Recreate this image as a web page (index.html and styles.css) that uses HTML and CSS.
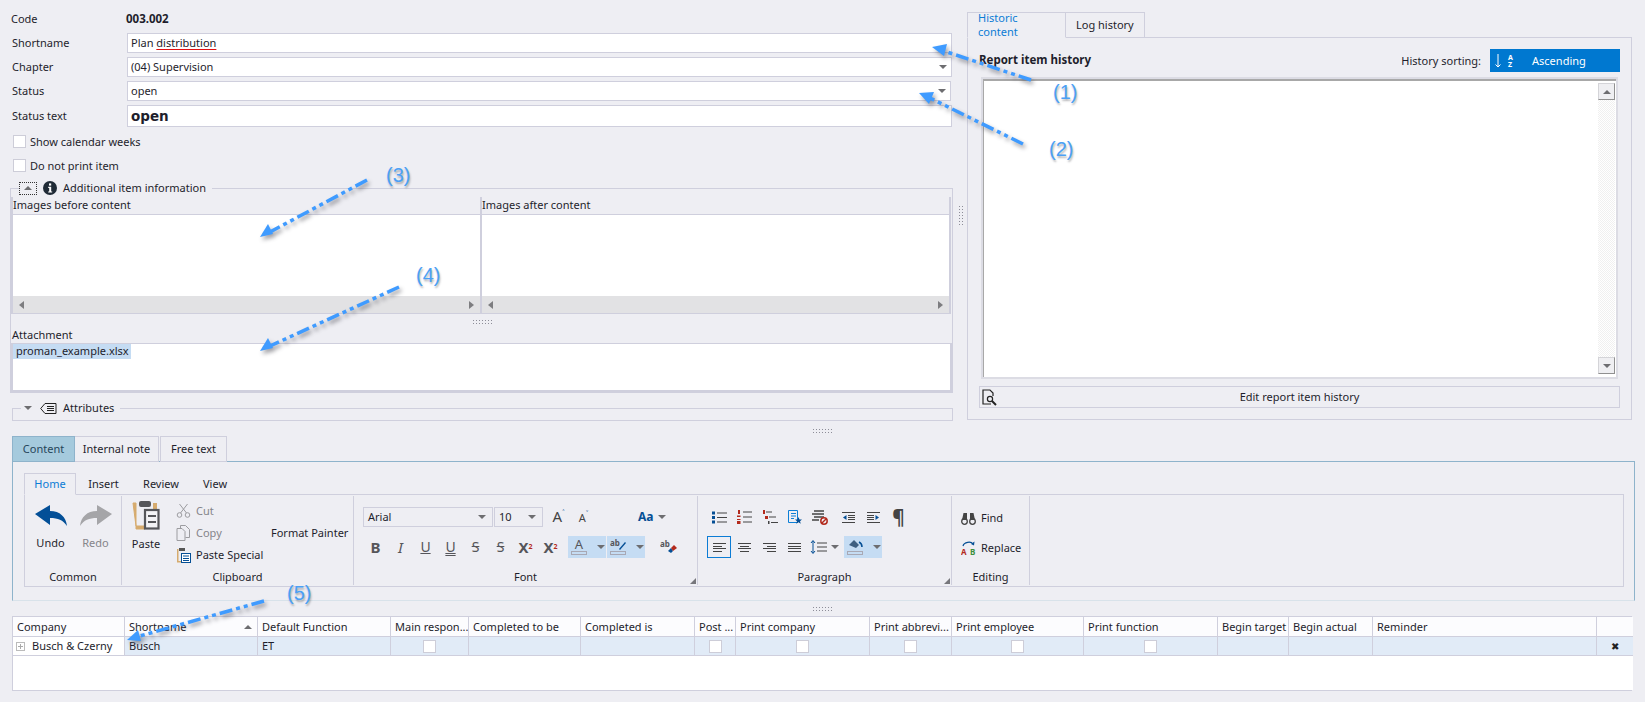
FILE: index.html
```html
<!DOCTYPE html>
<html lang="en">
<head>
<meta charset="utf-8">
<title>Report item</title>
<link rel="stylesheet" href="styles.css">
</head>
<body>
<div class="page">
  <div class="top">
    <section class="left">
      <div class="form">
        <div class="code-row"><span class="label">Code</span><b class="code">003.002</b></div>
        <div class="row"><span class="label">Shortname</span><div class="field">Plan&nbsp;<span class="spell">distribution</span></div></div>
        <div class="row"><span class="label">Chapter</span><div class="field combo">(04) Supervision<i class="tri"></i></div></div>
        <div class="row"><span class="label">Status</span><div class="field combo short">open<i class="tri"></i></div></div>
        <div class="row tall"><span class="label">Status text</span><div class="field big">open</div></div>
      </div>
      <div class="check first"><i class="box"></i>Show calendar weeks</div>
      <div class="check"><i class="box"></i>Do not print item</div>

      <fieldset class="group info">
        <legend class="legend">
          <span class="collapse"><i class="tri up"></i></span>
          <svg class="ico" width="14" height="14" viewBox="0 0 14 14"><circle cx="7" cy="7" r="7" fill="#1f2a36"/><rect x="6" y="2.4" width="2.2" height="2.2" fill="#fff"/><path d="M5.2 5.8h3v4.6h1v1.2H5.2v-1.2h1V7H5.2z" fill="#fff"/></svg>
          <span>Additional item information</span>
        </legend>
        <div class="images">
          <div class="image-col">
            <div class="image-head">Images before content</div>
            <div class="image-body"></div>
            <div class="hscroll"><i class="tri left-tri"></i><i class="tri right-tri"></i></div>
          </div>
          <div class="image-col">
            <div class="image-head">Images after content</div>
            <div class="image-body"></div>
            <div class="hscroll"><i class="tri left-tri"></i><i class="tri right-tri"></i></div>
          </div>
        </div>
        <div class="grip-row"><i class="grip"></i></div>
        <div class="attach-label">Attachment</div>
        <div class="attach"><span class="attach-item">proman_example.xlsx</span></div>
      </fieldset>

      <fieldset class="group attrs">
        <legend class="legend plain">
          <i class="tri down-big"></i>
          <svg class="ico" width="17" height="11" viewBox="0 0 17 11" fill="none" stroke="#222" stroke-width="1"><path d="M16 .5H5L.7 5.5 5 10.5h11z"/><path d="M7 3.5h7M7 5.5h7M7 7.5h7"/></svg>
          <span>Attributes</span>
        </legend>
      </fieldset>
    </section>

    <div class="vsplit"><i class="grip vertical"></i></div>

    <section class="right">
      <div class="tabs">
        <div class="tab active-blue">Historic content</div>
        <div class="tab">Log history</div>
      </div>
      <div class="history">
        <div class="history-head">
          <b>Report item history</b>
          <span class="sort-label">History sorting:</span>
          <div class="sort-btn">
            <svg width="13" height="14" viewBox="0 0 13 14" fill="none" stroke="#fff"><path d="M3 0v13M.5 10.5 3 13l2.500-2.500"/></svg>
            <span class="az"><span>A</span><span>Z</span></span>
            <span class="sort-text">Ascending</span>
          </div>
        </div>
        <div class="history-box">
          <div class="history-text">
            <div class="vscroll">
              <div class="sb"><i class="tri up"></i></div>
              <div class="sb"><i class="tri"></i></div>
            </div>
          </div>
        </div>
        <div class="edit-btn">
          <svg class="edit-ico" width="17" height="17" viewBox="0 0 17 17" fill="none" stroke="#222" stroke-width="1.200"><path d="M10 15H2V1h7l3 3v3"/><circle cx="9" cy="10" r="2.600"/><path d="m11 12 4 4" stroke-width="2"/></svg>
          <span>Edit report item history</span>
        </div>
      </div>
    </section>
  </div>

  <div class="hsplit"><i class="grip"></i></div>

  <section class="editor">
    <div class="tabs editor-tabs">
      <div class="tab tab-selected">Content</div>
      <div class="tab">Internal note</div>
      <div class="tab">Free text</div>
    </div>
    <div class="editor-panel">
      <div class="rtabs">
        <div class="rtab on">Home</div>
        <div class="rtab">Insert</div>
        <div class="rtab">Review</div>
        <div class="rtab">View</div>
      </div>
      <div class="ribbon">
        <div class="rgroup g-common">
          <div class="rbody bigs">
            <div class="big-btn"><svg width="32" height="21" viewBox="0 0 32 21"><path d="M0 9 15 0v6c10 0 16 6 17 15-4-6-9-8-17-8v7z" fill="#034f97"/></svg><span>Undo</span></div>
            <div class="big-btn dis"><svg width="32" height="21" viewBox="0 0 32 21"><path d="M32 9 17 0v6C7 6 1 12 0 21c4-6 9-8 17-8v7z" fill="#a5a5a8"/></svg><span>Redo</span></div>
          </div>
          <div class="rlabel">Common</div>
        </div>

        <div class="rgroup g-clip">
          <div class="rbody clip">
            <div class="big-btn paste"><svg width="28" height="30" viewBox="0 0 28 30"><path d="M1 3h3v26h9v-3H4z" fill="#d6ab6e" stroke="#d6ab6e"/><rect x="21" y="3" width="4" height="7" fill="#d6ab6e"/><rect x="7" y="1" width="12" height="6" rx="2" fill="#55565a"/><rect x="13" y="10" width="13.500" height="18.500" fill="#f3f3f6" stroke="#55565a" stroke-width="2.200"/><path d="M16 16h8M16 22h8" stroke="#55565a" stroke-width="2"/></svg><span>Paste</span></div>
            <div class="small-col">
              <div class="small dis"><svg width="14" height="14" viewBox="0 0 14 14" fill="none" stroke="#9c9ca0"><circle cx="3" cy="11" r="2.300"/><circle cx="11" cy="11" r="2.300"/><path d="M4 9 11 0M10 9 3 0"/></svg><span>Cut</span></div>
              <div class="small dis"><svg width="14" height="16" viewBox="0 0 14 16" fill="none" stroke="#9c9ca0"><path d="M4 3V.5h5l4 4v8H9M.5 3.500h5l3 3v9h-8z"/></svg><span>Copy</span></div>
              <div class="small"><svg width="15" height="15" viewBox="0 0 15 15"><path d="M1 1h1.500v12H6v1.500H1z" fill="#d6ab6e"/><rect x="3" y="0" width="6" height="3" fill="#555"/><rect x="5.500" y="5.500" width="9" height="9" fill="#fff" stroke="#054f95"/><path d="M7 8h6M7 10.500h6M7 12.500h6" stroke="#054f95"/></svg><span>Paste Special</span></div>
            </div>
            <span class="painter">Format Painter</span>
          </div>
          <div class="rlabel">Clipboard</div>
        </div>

        <div class="rgroup g-font">
          <div class="rbody tools">
            <div class="tool-row">
              <div class="select w-font">Arial<i class="tri"></i></div>
              <div class="select w-size">10<i class="tri"></i></div>
              <div class="glyphs">
                <span class="grow">A<sup>˄</sup></span>
                <span class="shrink">A<sup>˅</sup></span>
              </div>
              <span class="aa">Aa<i class="tri"></i></span>
            </div>
            <div class="tool-row r2">
              <span class="cell fb">B</span>
              <span class="cell fi">I</span>
              <span class="cell fu">U</span>
              <span class="cell fuu">U</span>
              <span class="cell fs">S</span>
              <span class="cell fs2">S</span>
              <span class="cell fx">X<sup>2</sup></span>
              <span class="cell fx">X<sub>2</sub></span>
              <div class="hl hl-a"><span class="hl-main"><span class="hl-t">A</span><i class="hl-bar"></i></span><i class="tri"></i></div>
              <div class="hl"><span class="hl-main"><svg width="16" height="11" viewBox="0 0 16 11"><text x="0" y="7" class="mini">ab</text><path d="M9 10 15 3l1 1-6 7z" fill="#054f95"/></svg><i class="hl-bar"></i></span><i class="tri"></i></div>
              <span class="clear"><svg width="17" height="14" viewBox="0 0 17 14"><text x="0" y="7" class="mini">ab</text><path d="m8 11 3-3 2 3-2 2z" fill="#054f95"/><path d="m11 8 3-3 3 3-4 3z" fill="#b32a1c"/></svg></span>
            </div>
          </div>
          <div class="rlabel">Font<i class="launcher"></i></div>
        </div>

        <div class="rgroup g-para">
          <div class="rbody tools">
            <div class="tool-row">
              <span class="cell"><svg width="15" height="13" viewBox="0 0 15 13"><path d="M5 2h10M5 6.500h10M5 11h10" stroke="#444"/><path d="M0 .5h3v3H0zM0 5h3v3H0zM0 9.500h3v3H0z" fill="#054f95"/></svg></span>
              <span class="cell"><svg width="15" height="14" viewBox="0 0 15 14"><path d="M6 2h9M6 7h9M6 12h9" stroke="#444"/><path d="M1 0h2v4H1zM0 5.500h3.500v1.500H0v2h3.500v1H0zM0 11h3.500v3H0z" fill="#b32a1c"/></svg></span>
              <span class="cell"><svg width="16" height="14" viewBox="0 0 16 14"><path d="M4 2h6M7 7h7M9 12.500h7" stroke="#444"/><path d="M1 0h2v4H1zM3 6h3v3H3z" fill="#b32a1c"/><path d="M6 11h1.500v3H6z" fill="#444"/></svg></span>
              <span class="cell"><svg width="14" height="14" viewBox="0 0 14 14" fill="none"><path d="M.5.500h9v12h-9z" stroke="#0c7fd6"/><path d="M3 3.500h5M3 6h5M3 8.500h3" stroke="#0c7fd6"/><path d="m10.500 7 1 2.400 2.500.2-2 1.600.8 2.500-2.300-1.400-2.300 1.400.8-2.500-2-1.600 2.500-.2z" fill="#054f95"/></svg></span>
              <span class="cell"><svg width="16" height="15" viewBox="0 0 16 15" fill="none"><path d="M2 1h10M0 4h12M2 7h10M0 10h7" stroke="#444" stroke-width="1.300"/><circle cx="12" cy="11" r="3.200" stroke="#b32a1c" stroke-width="1.500"/><path d="m10 13 4-4" stroke="#b32a1c" stroke-width="1.500"/></svg></span>
              <span class="cell wide-l"><svg width="13" height="11" viewBox="0 0 13 11"><path d="M0 .5h13M6 3.500h7M6 5.500h7M6 7.500h7M0 10.500h13" stroke="#444"/><path d="M4.500 3 1 5.500 4.500 8z" fill="#054f95"/></svg></span>
              <span class="cell"><svg width="13" height="11" viewBox="0 0 13 11"><path d="M0 .5h13M0 3.500h7M0 5.500h7M0 7.500h7M0 10.500h13" stroke="#444"/><path d="M8.500 3 12 5.500 8.500 8z" fill="#054f95"/></svg></span>
              <span class="cell pil">¶</span>
            </div>
            <div class="tool-row r2">
              <span class="cell align-on"><svg width="13" height="9" viewBox="0 0 13 9"><path d="M0 .5h13M0 3.500h9M0 5.500h13M0 8.500h9" stroke="#444"/></svg></span>
              <span class="cell"><svg width="13" height="9" viewBox="0 0 13 9"><path d="M0 .5h13M2 3.500h9M0 5.500h13M2 8.500h9" stroke="#444"/></svg></span>
              <span class="cell"><svg width="13" height="9" viewBox="0 0 13 9"><path d="M0 .5h13M4 3.500h9M0 5.500h13M4 8.500h9" stroke="#444"/></svg></span>
              <span class="cell"><svg width="13" height="9" viewBox="0 0 13 9"><path d="M0 .5h13M0 3.500h13M0 5.500h13M0 8.500h13" stroke="#444"/></svg></span>
              <span class="spacing"><svg width="17" height="14" viewBox="0 0 17 14" fill="none"><path d="M3 1v12M1 3l2-2.500L5 3M1 11l2 2.500L5 11" stroke="#054f95"/><path d="M7 3h10M7 7h10M7 11h10" stroke="#444"/></svg><i class="tri"></i></span>
              <div class="hl shade"><span class="hl-main"><svg width="15" height="11" viewBox="0 0 15 11"><path d="M1 6 6 1l5 5-3 3z" fill="#3f5f80"/><path d="M11 3c2 1 3 3 3 5" stroke="#054f95" stroke-width="1.500" fill="none"/></svg><i class="hl-bar"></i></span><i class="tri"></i></div>
            </div>
          </div>
          <div class="rlabel">Paragraph<i class="launcher"></i></div>
        </div>

        <div class="rgroup g-edit">
          <div class="rbody edit-col">
            <div class="small"><svg width="15" height="13" viewBox="0 0 15 13"><circle cx="3.500" cy="9.500" r="2.800" fill="none" stroke="#444" stroke-width="1.300"/><circle cx="11.500" cy="9.500" r="2.800" fill="none" stroke="#444" stroke-width="1.300"/><path d="M1 8 2.500 1H6v7zM9 8V1h3.500L14 8z" fill="#444"/></svg><span>Find</span></div>
            <div class="small"><svg width="15" height="14" viewBox="0 0 15 14" fill="none"><path d="M2 5C3 1 10 0 12 3" stroke="#054f95" stroke-width="1.200"/><path d="m13.500 .5-.5 4-3-1.500z" fill="#054f95"/><text x="0" y="14" class="mini red">A</text><text x="9" y="14" class="mini green">B</text></svg><span>Replace</span></div>
          </div>
          <div class="rlabel">Editing</div>
        </div>
      </div>
    </div>
  </section>

  <div class="hsplit lower"><i class="grip"></i></div>

  <section class="grid">
    <div class="gh">Company</div>
    <div class="gh sorted">Shortname<i class="tri up"></i></div>
    <div class="gh">Default Function</div>
    <div class="gh">Main respon...</div>
    <div class="gh">Completed to be</div>
    <div class="gh">Completed is</div>
    <div class="gh">Post ...</div>
    <div class="gh">Print company</div>
    <div class="gh">Print abbrevi...</div>
    <div class="gh">Print employee</div>
    <div class="gh">Print function</div>
    <div class="gh">Begin target</div>
    <div class="gh">Begin actual</div>
    <div class="gh">Reminder</div>
    <div class="gh"></div>

    <div class="gc first-col"><i class="plus"></i>Busch &amp; Czerny</div>
    <div class="gc">Busch</div>
    <div class="gc">ET</div>
    <div class="gc mid"><i class="box"></i></div>
    <div class="gc"></div>
    <div class="gc"></div>
    <div class="gc mid"><i class="box"></i></div>
    <div class="gc mid"><i class="box"></i></div>
    <div class="gc mid"><i class="box"></i></div>
    <div class="gc mid"><i class="box"></i></div>
    <div class="gc mid"><i class="box"></i></div>
    <div class="gc"></div>
    <div class="gc"></div>
    <div class="gc"></div>
    <div class="gc mid del">✖</div>
    <div class="grid-blank"></div>
  </section>

  <svg class="arrows" width="1645" height="702" viewBox="0 0 1645 702">
    <g class="arrow"><path class="dash" d="M1031 80 944 51"/><path class="head" d="m932 47 15-3-3 12z"/></g>
    <g class="arrow"><path class="dash" d="M1023 144 930 98"/><path class="head" d="m919 93 15-1-5 12z"/></g>
    <g class="arrow"><path class="dash" d="M367 180 270 232"/><path class="head" d="m260 237 8-13 5 10z"/></g>
    <g class="arrow"><path class="dash" d="M399 287 270 346"/><path class="head" d="m260 351 8-13 5 10z"/></g>
    <g class="arrow"><path class="dash" d="M264 601 140 636"/><path class="head" d="m127 640 11-10 3 11z"/></g>
  </svg>
  <span class="note n1">(1)</span>
  <span class="note n2">(2)</span>
  <span class="note n3">(3)</span>
  <span class="note n4">(4)</span>
  <span class="note n5">(5)</span>
</div>
</body>
</html>
```

FILE: styles.css
```css
* { box-sizing: border-box; }
html, body { margin: 0; padding: 0; }
body { background: #eeeef3; color: #1e1e2c; font: 11px/14px "Noto Sans", "Open Sans", sans-serif; }
.page { position: relative; width: 1645px; height: 702px; overflow: hidden; }
i { display: block; font-style: normal; }
svg { display: block; flex: none; }

.tri { width: 0; height: 0; border-left: 4px solid transparent; border-right: 4px solid transparent; border-top: 4px solid #6d6d70; }
.tri.up { border-top: 0; border-bottom: 4px solid #6d6d70; }
.box { width: 13px; height: 13px; background: #fff; border: 1px solid #cdcdd8; }
.grip { width: 20px; height: 5px; background-image: radial-gradient(#8d8d98 .6px, transparent .8px); background-size: 3px 3px; }
.grip.vertical { width: 5px; height: 20px; }

.top { display: flex; height: 424px; padding: 0 13px 0 10px; }
.left { width: 943px; flex: none; }
.form { padding: 9px 1px 0 0; }
.code-row { height: 20px; display: flex; align-items: center; margin-bottom: 4px; }
.label { width: 116px; flex: none; padding-left: 1px; font-size: 11px; }
.code { font-size: 11.500px; }
.row { display: flex; align-items: stretch; height: 20px; margin-bottom: 4px; }
.row .label { display: flex; align-items: center; padding-left: 2px; width: 117px; }
.row.tall { height: 22px; }
.field { flex: 1; display: flex; align-items: center; position: relative; background: #fff; border: 1px solid #cfcfdd; padding-left: 3px; }
.combo { justify-content: space-between; padding-right: 4px; }
.short { margin-right: 1px; }
.spell { text-decoration: underline; text-decoration-color: #e01010; text-underline-offset: 2px; }
.big { font-size: 13.500px; font-weight: 700; font-family: "DejaVu Sans", sans-serif; padding-left: 3px; }
.check { display: flex; align-items: center; gap: 4px; height: 13px; margin: 11px 0 0 3px; }
.check.first { margin-top: 8px; }

.group { border: 1px solid #cfcfdd; margin: 0; padding: 0; min-width: 0; }
.legend { display: flex; align-items: center; gap: 6px; height: 14px; padding: 0 6px 0 0; margin-left: 8px; }
.info { margin-top: 9px; padding-top: 2px; height: 212px; }
.collapse { width: 18px; height: 13px; display: flex; align-items: center; justify-content: center; border: 1px dotted #333; }
.images { display: flex; border-left: 2px solid #cfcfdd; border-right: 2px solid #cfcfdd; border-bottom: 1px solid #cfcfdd; margin-left: 0; margin-right: 1px; }
.image-col { flex: 1; min-width: 0; }
.image-col + .image-col { border-left: 2px solid #cfcfdd; }
.image-col:first-child { flex: none; width: 467px; }
.image-head { height: 18px; padding-left: 0; line-height: 16px; border-bottom: 1px solid #cfcfdd; }
.image-body { height: 81px; background: #fff; }
.hscroll { height: 17px; background: #e2e2e4; display: flex; align-items: center; justify-content: space-between; padding: 0 6px; }
.left-tri, .right-tri { border: 0; }
.left-tri { border-top: 4px solid transparent; border-bottom: 4px solid transparent; border-right: 5px solid #7d7d80; }
.right-tri { border-top: 4px solid transparent; border-bottom: 4px solid transparent; border-left: 5px solid #7d7d80; }
.grip-row { height: 14px; display: flex; align-items: center; justify-content: center; padding-left: 0; }
.attach-label { height: 15px; padding-left: 1px; }
.attach { height: 50px; background: #fff; border: 2px solid #cfcfdd; border-top-width: 1px; border-bottom-width: 3px; }
.attach-item { display: block; width: 118px; height: 15px; background: #c5dcf3; padding-left: 3px; }
.attrs { margin: 8px 0 0 2px; height: 20px; }
.legend.plain { margin-left: 8px; padding-left: 3px; }
.down-big { margin-right: 2px; }

.vsplit { width: 14px; flex: none; display: flex; justify-content: center; padding-top: 205px; }
.right { flex: 1; padding-top: 12px; min-width: 0; }
.tabs { display: flex; height: 26px; position: relative; z-index: 1; margin-bottom: -1px; }
.tab { padding: 0 10px; display: flex; align-items: center; border: 1px solid #cfcfdd; border-left: 0; }
.tab:first-child { border-left: 1px solid #cfcfdd; }
.active-blue { color: #0c7cd5; border-bottom-color: #eeeef3; width: 99px; }
.tabs .tab:nth-child(2) { min-width: 74px; }
.history { height: 383px; border: 1px solid #cfcfdd; padding: 11px 11px 0 11px; }
.history-head { display: flex; align-items: center; height: 23px; }
.history-head b { flex: 1; font-size: 11.500px; position: relative; top: -1px; }
.sort-label { margin-right: 9px; }
.sort-btn { width: 130px; height: 23px; background: #0078d0; color: #fff; display: flex; align-items: center; padding-left: 5px; }
.az { display: flex; flex-direction: column; font-size: 7px; line-height: 7px; font-weight: 700; margin-left: 0; }
.sort-text { flex: 1; text-align: center; padding-right: 15px; }
.history-box { margin: 5px 2px 0 2px; height: 302px; border: 2px solid #dcdce4; border-bottom-width: 2px; background: #fff; padding: 0; }
.history-text { height: 100%; border-top: 2px solid #a8a8a8; border-left: 1px solid #a8a8a8; display: flex; justify-content: flex-end; padding: 2px 1px 0 0; }
.vscroll { width: 17px; height: 291px; display: flex; flex-direction: column; justify-content: space-between; background-image: repeating-conic-gradient(#f0f0f0 0 25%, #fff 0 50%); background-size: 2px 2px; }
.sb { height: 17px; background: #efeff2; border: 1px solid #d4d4d8; border-right-color: #909090; border-bottom-color: #909090; display: flex; align-items: center; justify-content: center; }
.edit-btn { margin-top: 7px; height: 22px; border: 1px solid #cfcfdd; display: flex; align-items: center; justify-content: center; position: relative; }
.edit-ico { position: absolute; left: 1px; top: 2px; }

.hsplit { height: 12px; display: flex; justify-content: center; align-items: center; padding-left: 0; margin-left: -2px; }
.editor { padding-left: 12px; padding-right: 10px; }
.editor-tabs { height: 26px; }
.editor-tabs .tab { padding: 0; width: 84px; justify-content: center; border-color: #cfcfdd; }
.editor-tabs .tab:first-child { width: 63px; background: #a5cadd; border-color: #8eb3cb; color: #26465a; }
.editor-tabs .tab:last-child { width: 67px; margin-left: 1px; border-left: 1px solid #cfcfdd; }
.editor-panel { height: 140px; border: 1px solid #8eb3cb; border-bottom-color: #d8e2ea; padding: 11px 10px 0 11px; }
.rtabs { display: flex; height: 22px; position: relative; margin-bottom: -1px; }
.rtab { width: 56px; display: flex; align-items: center; justify-content: center; }
.rtab.on { width: 52px; color: #0c7cd5; border: 1px solid #cfcfdd; border-bottom-color: #eeeef3; }
.rtabs .rtab:nth-child(2) { width: 55px; }
.rtabs .rtab:nth-child(3) { width: 60px; }
.rtabs .rtab:nth-child(4) { width: 48px; }
.ribbon { height: 93px; border: 1px solid #cfcfdd; display: flex; }
.rgroup { display: flex; flex-direction: column; border-right: 1px solid #cfcfdd; margin: 1px 0; }
.g-common { width: 97px; }
.g-clip { width: 232px; }
.g-font { width: 344px; }
.g-para { width: 254px; }
.g-edit { width: 78px; }
.rbody { flex: 1; min-height: 0; }
.rlabel { height: 16px; text-align: center; position: relative; line-height: 15px; }
.launcher { position: absolute; right: 1px; bottom: 1px; width: 0; height: 0; border-left: 6px solid transparent; border-bottom: 6px solid #77777c; }
.bigs, .clip { display: flex; }
.bigs { padding: 9px 0 0 3px; }
.big-btn { width: 45px; display: flex; flex-direction: column; align-items: center; }
.big-btn span { margin-top: 10px; }
.dis { color: #85858a; }
.clip { padding-top: 4px; }
.paste { width: 48px; }
.paste span { margin-top: 7px; }
.small-col { width: 95px; margin-left: 6px; padding-top: 0; }
.small { display: flex; align-items: center; height: 22px; gap: 5px; }
.small svg { width: 15px; }
.painter { align-self: flex-start; margin-top: 26px; }
.tools { padding: 11px 0 0 9px; }
.tool-row { display: flex; align-items: center; height: 20px; }
.tool-row.r2 { height: 22px; margin-top: 9px; }
.select { height: 20px; border: 1px solid #cfcfdd; display: flex; align-items: center; justify-content: space-between; padding: 0 6px 0 4px; margin-right: 1px; }
.w-font { width: 130px; }
.w-size { width: 49px; }
.glyphs { display: flex; align-items: baseline; margin-left: 2px; }
.grow { width: 25px; text-align: center; font-size: 15px; color: #444; }
.shrink { width: 25px; text-align: center; font-size: 11px; color: #444; }
.glyphs sup { font-size: 8px; color: #054f95; line-height: 0; }
.aa { margin-left: 42px; display: flex; align-items: center; gap: 4px; color: #054f95; font-weight: 700; font-size: 12px; }
.cell { width: 25px; height: 22px; display: flex; align-items: center; justify-content: center; flex: none; color: #55555a; }
.wide-l { margin-left: 4px; }
.fb { font-weight: 700; font-size: 15px; }
.fi { font-style: italic; font-size: 15px; }
.fu { text-decoration: underline; font-size: 14px; }
.fuu { text-decoration: underline double; font-size: 14px; }
.fs, .fs2 { text-decoration: line-through; font-size: 14px; }
.fx { font-weight: 700; font-size: 15px; }
.fx sup, .fx sub { font-size: 7px; line-height: 0; color: #b32a1c; }
.hl { width: 38px; height: 22px; background: #c5dcf3; display: flex; align-items: center; padding-left: 3px; gap: 10px; margin-right: 1px; }
.hl-a { margin-left: 5px; }
.hl-main { width: 16px; display: flex; flex-direction: column; align-items: center; }
.hl-t { line-height: 11px; color: #55555a; font-size: 13px; }
.hl-bar { width: 16px; height: 4px; border: 1px solid #a8a8b4; margin-top: 1px; }
.clear { margin-left: 14px; }
.mini { font: 700 8px "Noto Sans", sans-serif; fill: #55555a; }
.mini.red { fill: #b32a1c; }
.mini.green { fill: #3c8f3c; }
.pil { font-size: 19px; font-weight: 700; color: #444; }
.align-on { width: 24px; border: 1px solid #0c7cd5; margin-right: 1px; }
.spacing { display: flex; align-items: center; gap: 4px; margin-left: 3px; }
.shade { margin-left: 5px; }
.edit-col { padding: 12px 0 0 9px; }
.edit-col .small { height: 20px; margin-bottom: 10px; }

.lower { height: 15px; margin-left: -2px; }
.grid { margin: 0 13px 0 12px; display: grid; grid-template-columns: 112px 133px 133px 78px 112px 114px 41px 134px 82px 132px 134px 71px 84px 224px 36px; grid-template-rows: 20px 19px 34px; border: 1px solid #cfcfdd; background: #fff; }
.gh { border-right: 1px solid #cfcfdd; border-bottom: 1px solid #cfcfdd; padding-left: 4px; display: flex; align-items: center; white-space: nowrap; overflow: hidden; background: #fcfcfe; }
.gh:nth-child(15) { border-right: 0; }
.sorted { justify-content: space-between; padding-right: 5px; }
.gc { background: #e1ebf7; border-right: 1px solid #cfcfdd; border-bottom: 1px solid #cfcfdd; padding-left: 4px; display: flex; align-items: center; white-space: nowrap; }
.first-col { background: #fff; padding-left: 3px; gap: 7px; }
.mid { justify-content: center; padding-left: 0; }
.del { border-right: 0; font-size: 10px; color: #222; }
.plus { width: 9px; height: 9px; border: 1px solid #bbb; background: linear-gradient(#aaa, #aaa) center / 5px 1px no-repeat, linear-gradient(#aaa, #aaa) center / 1px 5px no-repeat; }
.grid-blank { grid-column: 1 / -1; background: #fff; }

.arrows { position: absolute; left: 0; top: 0; pointer-events: none; }
.arrow { filter: drop-shadow(2px 3px 2px rgba(40, 40, 50, .45)); }
.dash { fill: none; stroke: #3f9bff; stroke-width: 3.500; stroke-dasharray: 13 4 4 4 4 4; }
.head { fill: #3f9bff; }
.note { position: absolute; font: 20px/24px "Liberation Sans", sans-serif; color: #4ba0f5; text-shadow: 1px 2px 2px rgba(40, 40, 50, .35); }
.n1 { left: 1053px; top: 80px; }
.n2 { left: 1049px; top: 137px; }
.n3 { left: 386px; top: 163px; }
.n4 { left: 416px; top: 263px; }
.n5 { left: 287px; top: 581px; }
```
